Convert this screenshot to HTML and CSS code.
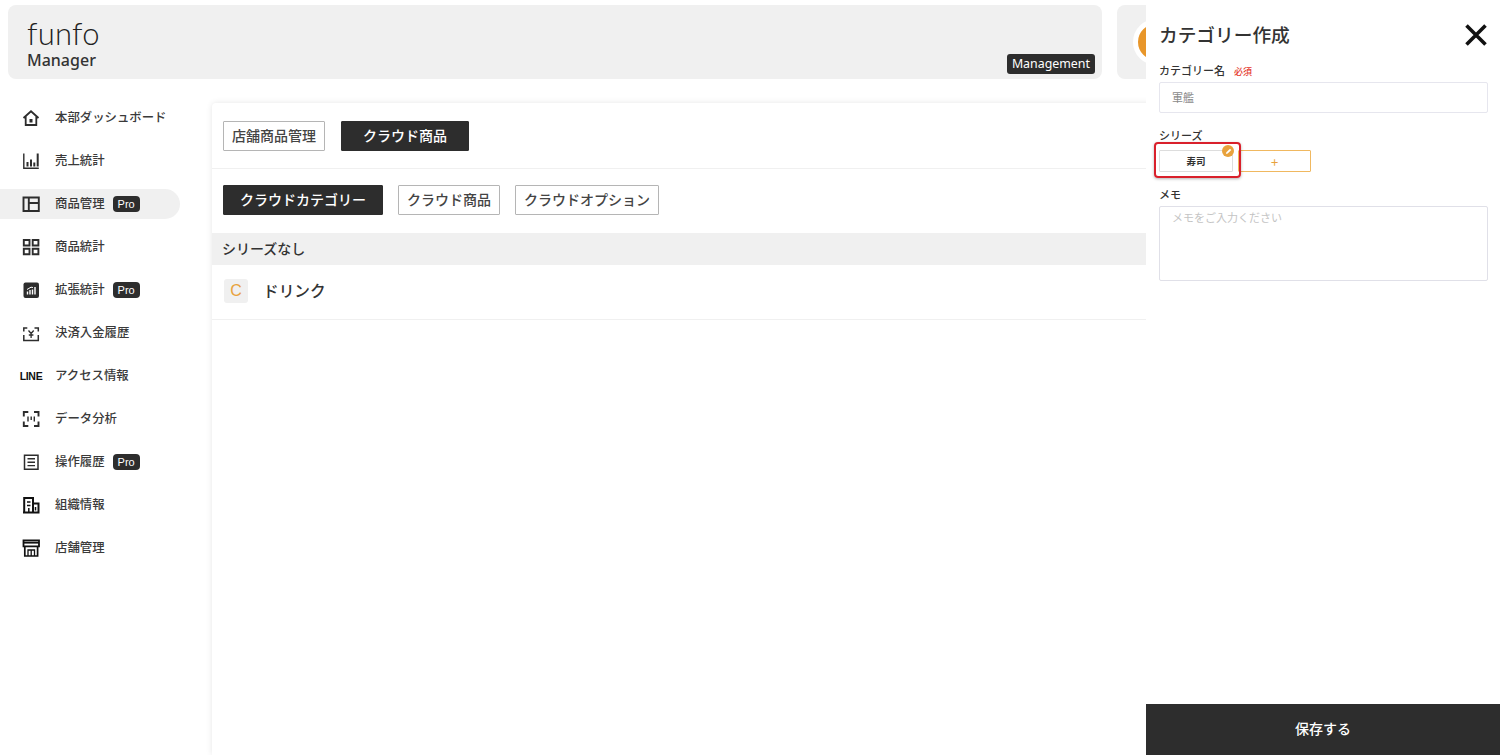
FILE: index.html
```html
<!DOCTYPE html>
<html lang="ja">
<head>
    <meta charset="UTF-8">
    <meta name="viewport" content="width=device-width, initial-scale=1.0">
    <title>funfo Manager</title>
    <link rel="stylesheet" href="styles.css">
</head>
<body>

<div class="header">
    <div class="brand">
        <div class="logo">
            <div class="logo-mark">funfo</div>
            <div class="logo-sub">Manager</div>
        </div>
        <span class="brand-tag">Management</span>
    </div>
    <div class="account"><span class="avatar"></span></div>
</div>

<div class="page">
    <div class="sidebar">
        <div class="nav-item">
            <span class="nav-icon"><svg width="18" height="18" viewBox="0 0 18 18"><path d="M1.500 9 9 2.300 16.500 9M3.700 7.500V16h10.600V7.500" fill="none" stroke="#2d2d2d" stroke-width="1.800"/><rect x="7.500" y="10" width="3" height="3.500" fill="#2d2d2d"/></svg></span>
            <span>本部ダッシュボード</span>
        </div>
        <div class="nav-item">
            <span class="nav-icon"><svg width="18" height="18" viewBox="0 0 18 18"><path d="M1.800 1.500v14.700h15" fill="none" stroke="#2d2d2d" stroke-width="1.400"/><path d="M5.500 10v4.500M9 7.500v7M12.300 10.500v4M15.700 1.500v13" fill="none" stroke="#2d2d2d" stroke-width="2"/></svg></span>
            <span>売上統計</span>
        </div>
        <div class="nav-item nav-active">
            <span class="nav-icon"><svg width="18" height="18" viewBox="0 0 18 18"><path d="M1.500 2.500h15.300v13.500H1.500zM6.800 2.500V16M6.800 8h10" fill="none" stroke="#2d2d2d" stroke-width="1.900"/></svg></span>
            <span>商品管理</span>
            <span class="pro">Pro</span>
        </div>
        <div class="nav-item">
            <span class="nav-icon"><svg width="18" height="18" viewBox="0 0 18 18"><path d="M1.800 2h5.700v5.500H1.800zM10.700 2h5.700v5.500h-5.700zM1.800 10.700h5.700v5.500H1.800zM10.700 10.700h5.700v5.500h-5.700z" fill="none" stroke="#2d2d2d" stroke-width="1.900"/></svg></span>
            <span>商品統計</span>
        </div>
        <div class="nav-item">
            <span class="nav-icon"><svg width="18" height="18" viewBox="0 0 18 18"><rect x="1.500" y="1.500" width="15.500" height="15.500" rx="2" fill="#2d2d2d"/><path d="M5.500 13.500V10.500M8 13.500V9M10.500 13.500V8.500M13 13.500V6" stroke="#fff" stroke-width="1.400"/><path d="M5 8.500 9 6.200l2 .3" fill="none" stroke="#fff"/></svg></span>
            <span>拡張統計</span>
            <span class="pro">Pro</span>
        </div>
        <div class="nav-item">
            <span class="nav-icon"><svg width="18" height="18" viewBox="0 0 18 18"><path d="M1.800 7.500V4h3.500M12.500 4h3.800v3.500M1.800 11v5.500h14.500V11" fill="none" stroke="#2d2d2d" stroke-width="1.500"/><path d="M6.500 6.500l2.600 3 2.600-3M9.100 9.500V14M6.800 11h4.600" fill="none" stroke="#2d2d2d" stroke-width="1.300"/></svg></span>
            <span>決済入金履歴</span>
        </div>
        <div class="nav-item">
            <span class="nav-icon line-text">LINE</span>
            <span>アクセス情報</span>
        </div>
        <div class="nav-item">
            <span class="nav-icon"><svg width="18" height="18" viewBox="0 0 18 18"><path d="M1.800 6.500V2h4.500M12 2h4.500v4.500M1.800 11.500V16h4.500M12 16h4.500v-4.500" fill="none" stroke="#2d2d2d" stroke-width="1.900"/><path d="M6 6.500v5M9.200 6.500v3.500M12.300 6.500v5" stroke="#2d2d2d" stroke-width="1.400"/></svg></span>
            <span>データ分析</span>
        </div>
        <div class="nav-item">
            <span class="nav-icon"><svg width="18" height="18" viewBox="0 0 18 18"><path d="M2.500 2.200h13.500v14H2.500z" fill="none" stroke="#2d2d2d" stroke-width="1.500"/><path d="M5.500 5.800h7.500M5.500 9.200h7.500M5.500 12.600h7.500" stroke="#2d2d2d" stroke-width="1.400"/></svg></span>
            <span>操作履歴</span>
            <span class="pro">Pro</span>
        </div>
        <div class="nav-item">
            <span class="nav-icon"><svg width="18" height="18" viewBox="0 0 18 18"><path d="M2.200 17V2h8.800v15M11 7.500h5.500V17M1 16.500h16.500" fill="none" stroke="#111" stroke-width="2"/><path d="M5 6h3.500M5 9.500h3.500M6.800 12v4.500M13.500 11v3.500" stroke="#111" stroke-width="1.500"/></svg></span>
            <span>組織情報</span>
        </div>
        <div class="nav-item">
            <span class="nav-icon"><svg width="18" height="18" viewBox="0 0 18 18"><path d="M2.800 7V17h12.800V7" fill="none" stroke="#111" stroke-width="1.700"/><path d="M1.500 1.500h15.500v5.800H1.500z" fill="none" stroke="#111" stroke-width="1.800"/><path d="M1.500 3.800h15.500" stroke="#111" stroke-width="1.600"/><path d="M6 17v-6h6.500v6M9.200 11v6" fill="none" stroke="#111" stroke-width="1.300"/></svg></span>
            <span>店舗管理</span>
        </div>
    </div>

    <div class="main">
        <div class="tabs tabs-top">
            <span class="btn">店舗商品管理</span>
            <span class="btn btn-dark btn-top">クラウド商品</span>
        </div>
        <div class="tabs tabs-sub">
            <span class="btn btn-dark btn-wide">クラウドカテゴリー</span>
            <span class="btn">クラウド商品</span>
            <span class="btn">クラウドオプション</span>
        </div>
        <div class="series-head">シリーズなし</div>
        <div class="category-row">
            <span class="category-icon">C</span>
            <span class="category-name">ドリンク</span>
        </div>
    </div>
</div>

<div class="drawer">
    <div class="drawer-body">
        <div class="drawer-head">
            <div class="drawer-title">カテゴリー作成</div>
            <svg class="close" width="24" height="24" viewBox="0 0 24 24"><path d="M2.500 2.500l19 19M21.500 2.500l-19 19" stroke="#111" stroke-width="3.600"/></svg>
        </div>
        <div class="label label-name">カテゴリー名<span class="required">必須</span></div>
        <div class="input">軍艦</div>
        <div class="label label-series">シリーズ</div>
        <div class="chips">
            <div class="chip">寿司
                <span class="callout"></span>
                <span class="chip-edit"><svg width="11" height="11" viewBox="0 0 11 11"><path d="M3 8l.4-1.700L7 2.800l1.300 1.300-3.600 3.500z" fill="#fff"/></svg></span>
            </div>
            <div class="chip-add">+</div>
        </div>
        <div class="label label-memo">メモ</div>
        <div class="textarea">メモをご入力ください</div>
    </div>
    <div class="save">保存する</div>
</div>

</body>
</html>
```

FILE: styles.css
```css
* { box-sizing: border-box; }
html, body { height: 100%; }
body { margin: 0; height: 755px; overflow: hidden; background-color: #ffffff; color: #2d2d2d; font-family: "Noto Sans CJK JP", "Noto Sans", sans-serif; }

.header { display: flex; gap: 15px; padding: 5px 0 0 8px; height: 79px; }
.brand { display: flex; justify-content: space-between; align-items: flex-end; width: 1094px; height: 74px; padding: 0 7px 5px 19px; border-radius: 8px; background-color: #f0f0f0; }
.logo { align-self: flex-start; padding-top: 12px; }
.logo-mark { height: 33px; font-family: Lato, sans-serif; font-weight: 300; font-size: 31px; line-height: 32px; letter-spacing: 0.2px; color: #222222; }
.logo-sub { font-family: "Noto Sans", sans-serif; font-weight: 500; font-size: 16px; line-height: 20px; color: #333333; }
.brand-tag { height: 20px; padding: 0 5px; border-radius: 3px; background-color: #2d2d2d; color: #ffffff; font-family: "Noto Sans", sans-serif; font-size: 12.4px; line-height: 19px; }
.account { flex: 1; height: 74px; display: flex; align-items: center; padding-left: 16px; border-radius: 8px; background-color: #f0f0f0; }
.avatar { width: 46px; height: 46px; flex: none; border: 5px solid #ffffff; border-radius: 50%; background-color: #e8962a; }

.page { display: flex; padding-top: 24px; }
.sidebar { width: 180px; flex: none; }
.nav-item { display: flex; align-items: center; height: 30px; margin-bottom: 13px; padding: 0 0 2px 22px; border-radius: 0 15px 15px 0; font-size: 12.4px; font-weight: 500; color: #3a3a3a; }
.nav-active { background-color: #f0f0f0; }
.nav-icon { display: flex; align-items: center; justify-content: center; width: 18px; height: 18px; margin: 2px 15px 0 0; }
.line-text { flex: none; font-family: "Liberation Sans", sans-serif; font-size: 10.500px; font-weight: 700; letter-spacing: -0.3px; color: #111111; }
.pro { margin: 2px 0 0 8px; height: 16px; padding: 0 5px; border-radius: 4px; background-color: #2d2d2d; color: #ffffff; font-family: "Liberation Sans", sans-serif; font-size: 11px; line-height: 16px; }

.main { flex: 1; height: 652px; margin-left: 32px; border-radius: 4px 0 0 0; box-shadow: 0 0 6px rgba(0, 0, 0, 0.1); }
.tabs { display: flex; gap: 16px; padding-left: 11px; }
.tabs-top { height: 66px; padding-top: 18px; border-bottom: 1px solid #f0f0f0; }
.tabs-sub { height: 64px; padding-top: 16px; gap: 15px; }
.btn { display: block; height: 30px; padding: 0 8px; border: 1px solid #b5b5b5; border-radius: 1px; font-size: 14px; font-weight: 500; line-height: 26px; color: #444444; }
.btn-dark { border-color: #2d2d2d; background-color: #2d2d2d; color: #ffffff; }
.btn-wide { padding: 0 16px; }
.btn-top { padding: 0 21px; }
.series-head { height: 32px; padding-left: 10px; background-color: #f0f0f0; font-size: 14px; font-weight: 500; line-height: 30px; color: #333333; }
.category-row { display: flex; align-items: center; height: 55px; padding: 0 0 2px 12px; border-bottom: 1px solid #f0f0f0; }
.category-icon { width: 24px; height: 24px; border-radius: 3px; background-color: #f0f0f0; color: #e8a23c; font-family: "Liberation Sans", sans-serif; font-size: 16px; line-height: 24px; text-align: center; }
.category-name { margin-left: 15px; font-size: 15.7px; font-weight: 500; line-height: 20px; color: #333333; }

.drawer { position: fixed; top: 0; right: 0; bottom: 0; width: 354px; display: flex; flex-direction: column; background-color: #ffffff; }
.drawer-body { flex: 1; padding: 0 12px 0 13px; }
.drawer-head { display: flex; justify-content: space-between; align-items: center; height: 60px; padding-top: 10px; }
.drawer-title { padding-bottom: 4px; font-size: 18.7px; font-weight: 500; color: #333333; }
.label { font-size: 11px; font-weight: 500; line-height: 16px; color: #333333; }
.label-name { margin-top: 2px; }
.required { margin-left: 9px; font-size: 9px; color: #e5382e; }
.input { height: 31px; margin-top: 2px; padding-left: 12px; border: 1px solid #e6e6ee; border-radius: 2px; font-size: 11px; line-height: 29px; color: #8a8a8a; }
.label-series { margin-top: 14px; }
.chips { display: flex; margin-top: 7px; }
.chip { position: relative; width: 74px; height: 22px; border: 1px solid #dddddd; border-radius: 1px; font-size: 9.5px; font-weight: 700; line-height: 20px; text-align: center; color: #333333; }
.callout { position: absolute; z-index: 1; top: -9px; left: -6px; width: 87px; height: 36px; border: 2.5px solid #d9202b; border-radius: 4px; box-shadow: 0 1px 3px rgba(0, 0, 0, 0.3); }
.chip-edit { position: absolute; z-index: 2; top: -6px; right: -2px; display: flex; width: 12px; height: 12px; border-radius: 50%; background-color: #e8a23c; align-items: center; justify-content: center; }
.chip-add { width: 73px; height: 22px; margin-left: 5px; border: 1px solid #f0b860; border-radius: 1px; color: #e8a23c; font-size: 13px; line-height: 21px; text-align: center; }
.label-memo { margin-top: 14px; }
.textarea { height: 75px; margin-top: 4px; padding: 2px 12px; border: 1px solid #e0e0e8; border-radius: 2px; font-size: 11px; line-height: 16px; color: #c4c4c4; }
.save { height: 51px; background-color: #2d2d2d; color: #ffffff; font-size: 14px; font-weight: 500; line-height: 48px; text-align: center; }
```
